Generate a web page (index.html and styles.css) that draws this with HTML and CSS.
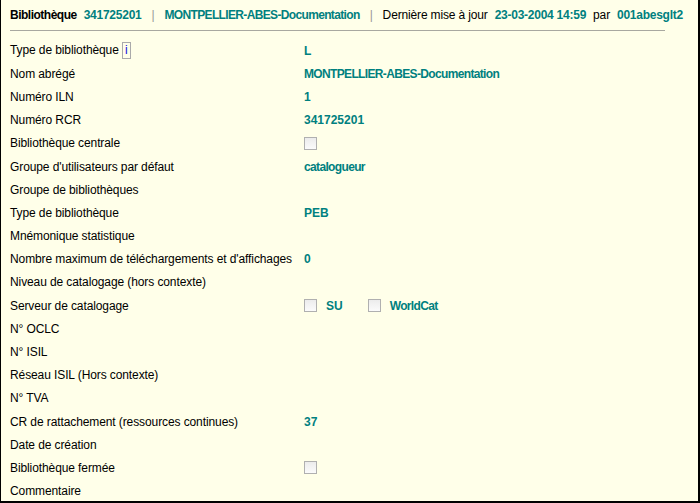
FILE: index.html
```html
<!DOCTYPE html>
<html lang="fr">
<head>
    <meta charset="UTF-8">
    <title>Bibliothèque 341725201</title>
    <link rel="stylesheet" href="styles.css">
</head>
<body>
    <div class="panel">
        <div class="header">
            <b class="title">Bibliothèque</b>
            <span class="val">341725201</span>
            <span class="sep">|</span>
            <span class="val tight">MONTPELLIER-ABES-Documentation</span>
            <span class="sep">|</span>
            <span>Dernière mise à jour</span>
            <span class="val">23-03-2004 14:59</span>
            <span>par</span>
            <span class="val">001abesglt2</span>
        </div>

        <div class="fields">
            <div class="row">
                <div class="label">Type de bibliothèque <span class="info">i</span></div>
                <div class="value">L</div>
            </div>
            <div class="row">
                <div class="label">Nom abrégé</div>
                <div class="value tight">MONTPELLIER-ABES-Documentation</div>
            </div>
            <div class="row">
                <div class="label">Numéro ILN</div>
                <div class="value">1</div>
            </div>
            <div class="row">
                <div class="label">Numéro RCR</div>
                <div class="value">341725201</div>
            </div>
            <div class="row">
                <div class="label">Bibliothèque centrale</div>
                <div class="value"><span class="check"></span></div>
            </div>
            <div class="row">
                <div class="label">Groupe d'utilisateurs par défaut</div>
                <div class="value tight">catalogueur</div>
            </div>
            <div class="row">
                <div class="label">Groupe de bibliothèques</div>
                <div class="value"></div>
            </div>
            <div class="row">
                <div class="label">Type de bibliothèque</div>
                <div class="value">PEB</div>
            </div>
            <div class="row">
                <div class="label">Mnémonique statistique</div>
                <div class="value"></div>
            </div>
            <div class="row">
                <div class="label">Nombre maximum de téléchargements et d'affichages</div>
                <div class="value">0</div>
            </div>
            <div class="row">
                <div class="label">Niveau de catalogage (hors contexte)</div>
                <div class="value"></div>
            </div>
            <div class="row">
                <div class="label">Serveur de catalogage</div>
                <div class="value">
                    <span class="check"></span><span class="opt">SU</span>
                    <span class="check"></span><span class="opt tight">WorldCat</span>
                </div>
            </div>
            <div class="row">
                <div class="label">N° OCLC</div>
                <div class="value"></div>
            </div>
            <div class="row">
                <div class="label">N° ISIL</div>
                <div class="value"></div>
            </div>
            <div class="row">
                <div class="label">Réseau ISIL (Hors contexte)</div>
                <div class="value"></div>
            </div>
            <div class="row">
                <div class="label">N° TVA</div>
                <div class="value"></div>
            </div>
            <div class="row">
                <div class="label">CR de rattachement (ressources continues)</div>
                <div class="value">37</div>
            </div>
            <div class="row">
                <div class="label">Date de création</div>
                <div class="value"></div>
            </div>
            <div class="row">
                <div class="label">Bibliothèque fermée</div>
                <div class="value"><span class="check"></span></div>
            </div>
            <div class="row">
                <div class="label">Commentaire</div>
                <div class="value"></div>
            </div>
        </div>
    </div>
</body>
</html>
```

FILE: styles.css
```css
body {
    margin: 0;
    font-family: "Liberation Sans", Arial, sans-serif;
    font-size: 12px;
    color: #000;
    background: #fff;
}

.panel {
    width: 697px;
    height: 501px;
    background: #ffffe9;
    border-left: 1px solid #000;
    border-right: 2px solid #000;
    border-bottom: 2px solid #000;
    overflow: hidden;
}

.header {
    margin: 0 33px 0 9px;
    height: 30px;
    display: flex;
    align-items: center;
    gap: 7px;
    border-bottom: 1px solid #a8a8a0;
    white-space: nowrap;
    letter-spacing: -0.15px;
}

.title {
    font-weight: bold;
    letter-spacing: -0.5px;
}

.val {
    color: #00807f;
    font-weight: bold;
    letter-spacing: -0.25px;
}

.sep {
    color: #999;
    margin: 0 3px;
}

.fields {
    padding: 8px 0 0 9px;
}

.row {
    display: flex;
    align-items: center;
    height: 23.2px;
}

.label {
    width: 294px;
    white-space: nowrap;
    letter-spacing: -0.1px;
}

.value {
    color: #00807f;
    font-weight: bold;
    display: flex;
    align-items: center;
    white-space: nowrap;
}

.tight {
    letter-spacing: -0.65px;
}

.info {
    display: inline-block;
    border: 1px solid #aaa;
    color: #1010e0;
    font-weight: normal;
    padding: 1px 2px;
    line-height: 13px;
    vertical-align: middle;
}

.check {
    display: inline-block;
    width: 11px;
    height: 11px;
    border: 1px solid #b0b0b0;
    background: linear-gradient(#ececec, #fbfbfb);
}

.opt {
    margin: 0 25px 0 9px;
}
```
